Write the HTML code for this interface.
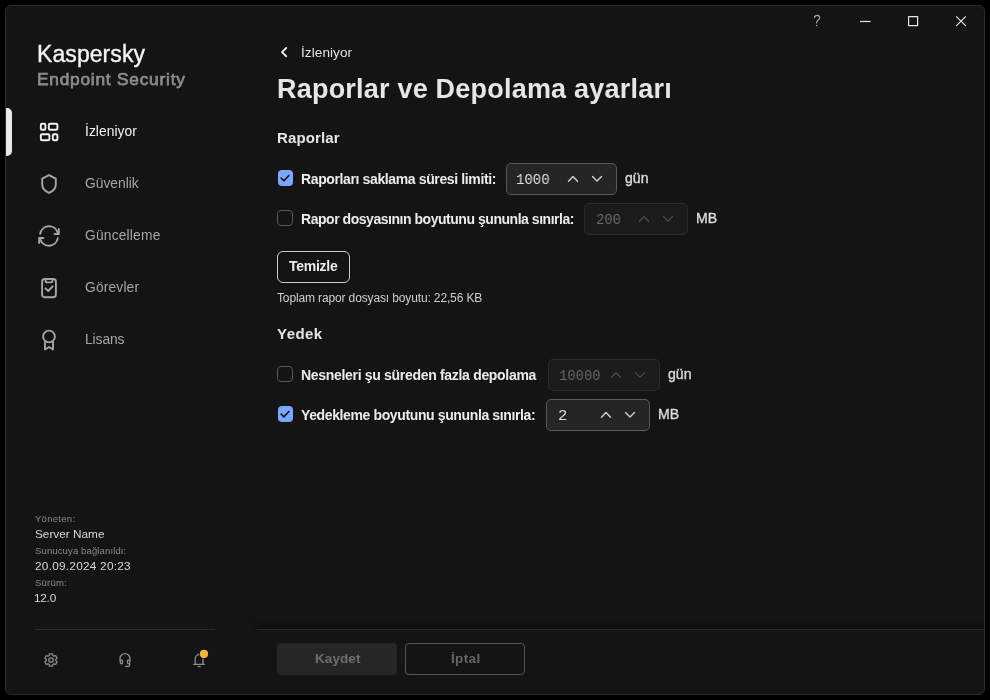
<!DOCTYPE html>
<html><head><meta charset="utf-8">
<style>
html,body{margin:0;padding:0;background:#000;width:990px;height:700px;overflow:hidden}
body{position:relative;font-family:"Liberation Sans",sans-serif}
.win{position:absolute;left:5px;top:5px;width:978px;height:688px;background:#141414;border:1px solid #2b2b32;border-radius:6px;overflow:hidden}
.t{position:absolute;white-space:nowrap;line-height:1;will-change:transform}
.abs{position:absolute;box-sizing:border-box}
svg{position:absolute;left:0;top:0;overflow:visible}
</style></head><body>
<div class="win"></div>
<!-- active indicator -->
<div class="abs" style="left:6px;top:108px;width:6px;height:48px;background:#e9e9e9;border-radius:0 5px 5px 0"></div>
<!-- separators -->
<div class="abs" style="left:35px;top:629px;width:180px;height:1px;background:#2a2a2a"></div>
<div class="abs" style="left:250px;top:621px;width:734px;height:8px;background:linear-gradient(to bottom,rgba(0,0,0,0),rgba(0,0,0,0.16) 60%,rgba(0,0,0,0.38));-webkit-mask-image:linear-gradient(to right,transparent,#000 10px)"></div>
<div class="abs" style="left:257px;top:629px;width:727px;height:1px;background:#2a2a2a"></div>
<!-- checkboxes -->
<div class="abs" style="left:277.5px;top:170.4px;width:15.2px;height:15.4px;background:#79a6fe;border-radius:4px"></div>
<div class="abs" style="left:277.3px;top:210.2px;width:15.5px;height:15.5px;border:1.5px solid #575757;border-radius:4px"></div>
<div class="abs" style="left:277.3px;top:366.2px;width:15.5px;height:15.5px;border:1.5px solid #575757;border-radius:4px"></div>
<div class="abs" style="left:277.5px;top:406.4px;width:15.2px;height:15.4px;background:#79a6fe;border-radius:4px"></div>
<!-- inputs -->
<div class="abs" style="left:505.5px;top:163px;width:111.5px;height:32px;background:#252525;border:1px solid #5a5a5a;border-radius:5px"></div>
<div class="abs" style="left:584px;top:203px;width:104px;height:32px;background:#1b1b1b;border:1px solid #2c2c2c;border-radius:5px"></div>
<div class="abs" style="left:548px;top:359px;width:112px;height:32px;background:#1b1b1b;border:1px solid #2c2c2c;border-radius:5px"></div>
<div class="abs" style="left:546px;top:399px;width:104px;height:32px;background:#252525;border:1px solid #5a5a5a;border-radius:5px"></div>
<!-- Temizle button -->
<div class="abs" style="left:277px;top:251px;width:73px;height:32px;border:1px solid #cdcdcd;border-radius:6px"></div>
<!-- footer buttons -->
<div class="abs" style="left:277px;top:643px;width:120px;height:32px;background:#262626;border-radius:4px"></div>
<div class="abs" style="left:405px;top:643px;width:120px;height:32px;border:1px solid #565656;border-radius:4px"></div>
<svg width="990" height="700" viewBox="0 0 990 700" fill="none" stroke-linecap="round" stroke-linejoin="round">
 <!-- window controls -->
 <g stroke="#e6e6e6" stroke-width="1.2" stroke-linecap="butt">
  <line x1="860" y1="21.5" x2="870.5" y2="21.5"/>
  <rect x="908.6" y="16.6" width="9" height="9"/>
  <path d="M956.2 16.3 L965.8 25.9 M965.8 16.3 L956.2 25.9"/>
 </g>
 <g stroke="#ababab" stroke-width="1.1">
  <path d="M814.4 17.6 C814.6 16.1 815.6 15.4 817 15.4 C818.6 15.4 819.6 16.4 819.6 17.7 C819.6 19.1 818.6 19.7 817.6 20.5 C816.9 21.1 816.6 21.8 816.6 23"/>
 </g>
 <circle cx="816.6" cy="25.5" r="0.75" fill="#ababab"/>
 <g>
 </g>
 <!-- checkmarks -->
 <g stroke="#141414" stroke-width="1.65">
  <path d="M281.2 178.1 L284 180.8 L288.9 175.5"/>
  <path d="M281.2 414.1 L284 416.8 L288.9 411.5"/>
 </g>
 <!-- chevrons enabled -->
 <g stroke="#d2d2d2" stroke-width="1.4">
  <path d="M568.5 181.3 L573 176.6 L577.5 181.3"/><path d="M592.5 176.6 L597 181.1 L601.5 176.6"/>
  <path d="M601.5 417.3 L606 412.6 L610.5 417.3"/><path d="M625.5 412.6 L630 417.1 L634.5 412.6"/>
 </g>
 <g stroke="#4e4e4e" stroke-width="1.3">
  <path d="M639.5 221.3 L644 216.6 L648.5 221.3"/><path d="M663.5 216.6 L668 221.1 L672.5 216.6"/>
  <path d="M611.5 377.3 L616 372.6 L620.5 377.3"/><path d="M635.5 372.6 L640 377.1 L644.5 372.6"/>
 </g>
 <!-- breadcrumb chevron -->
 <path d="M286.2 48 L282 52.1 L286.2 56.2" stroke="#ececec" stroke-width="1.9"/>
 <!-- nav icons -->
 <g stroke="#f2f2f2" stroke-width="1.9">
  <rect x="40.8" y="123.8" width="4.6" height="6" rx="1.3"/>
  <rect x="48.8" y="123.8" width="8.6" height="6" rx="1.3"/>
  <rect x="40.8" y="134.2" width="8.6" height="6" rx="1.3"/>
  <rect x="52.8" y="134.2" width="4.6" height="6" rx="1.3"/>
 </g>
 <g stroke="#a6a6a6" stroke-width="1.9">
  <path d="M49 175.2 L42.2 178.6 V184.6 C42.4 188.8 45.2 191.3 49 192.9 C52.8 191.3 55.6 188.8 55.8 184.6 V178.6 Z"/>
  <path d="M40.2 233.8 A9 9 0 0 1 57.6 232.4"/>
  <path d="M58.8 229 V234 H54.6"/>
  <path d="M57.8 238.2 A9 9 0 0 1 40.4 239.6"/>
  <path d="M39.2 243 V238 H43.4"/>
  <rect x="42.1" y="279" width="13.8" height="18.2" rx="2.6"/>
  <path d="M45.6 279.2 V281 A1.4 1.4 0 0 0 47 282.4 H51 A1.4 1.4 0 0 0 52.4 281 V279.2"/>
  <path d="M45.5 288.3 L48.2 291 L52.6 286.3"/>
  <circle cx="49" cy="336.5" r="5.9"/>
  <path d="M45 342 V349.5 L49 347 L53 349.5 V342"/>
 </g>
 <!-- bottom icons -->
 <g stroke="#8e8e8e" stroke-width="1.3">
  <path d="M49.20 655.55 L49.45 653.79 L52.55 653.79 L52.80 655.55 L53.96 656.22 L55.60 655.55 L57.15 658.24 L55.75 659.33 L55.75 660.67 L57.15 661.76 L55.60 664.45 L53.96 663.78 L52.80 664.45 L52.55 666.21 L49.45 666.21 L49.20 664.45 L48.04 663.78 L46.40 664.45 L44.85 661.76 L46.25 660.67 L46.25 659.33 L44.85 658.24 L46.40 655.55 L48.04 656.22 Z"/>
  <circle cx="51" cy="660" r="2.2"/>
  <path d="M120 660.5 V658.6 A5 5 0 0 1 130 658.6 V660.5"/>
  <rect x="120.3" y="659.8" width="2.2" height="4" rx="1.1"/>
  <rect x="127.5" y="659.8" width="2.2" height="4" rx="1.1"/>
  <path d="M129.6 663.8 V665.2 A1.2 1.2 0 0 1 128.4 666.4 H125.6"/>
  <path d="M193.7 664.3 H204.5 M195.2 664.3 V658.8 A3.9 4.2 0 0 1 203 658.8 V664.3 M199.1 654.6 V653.6 M198.2 666.6 H200.2"/>
 </g>
 <circle cx="204" cy="653.9" r="4.9" fill="#141414"/><circle cx="204" cy="653.9" r="4.1" fill="#f3b63e"/>
</svg>

<div class="t" style="left:37.02px;top:43.00px;font-family:'Liberation Sans';font-size:23px;font-weight:400;color:#f5f5f5;-webkit-text-stroke:0.35px #f5f5f5;letter-spacing:0.081px">Kaspersky</div>
<div class="t" style="left:37.23px;top:70.80px;font-family:'Liberation Sans';font-size:17.3px;font-weight:400;color:#8b8b8b;-webkit-text-stroke:0.75px #8b8b8b;letter-spacing:0.775px">Endpoint Security</div>
<div class="t" style="left:84.95px;top:124.90px;font-family:'Liberation Sans';font-size:13.8px;font-weight:400;color:#f2f2f2;letter-spacing:0.050px">İzleniyor</div>
<div class="t" style="left:84.70px;top:176.90px;font-family:'Liberation Sans';font-size:13.8px;font-weight:400;color:#a6a6a6;letter-spacing:0.007px">Güvenlik</div>
<div class="t" style="left:84.70px;top:228.90px;font-family:'Liberation Sans';font-size:13.8px;font-weight:400;color:#a6a6a6;letter-spacing:0.189px">Güncelleme</div>
<div class="t" style="left:84.60px;top:280.80px;font-family:'Liberation Sans';font-size:13.8px;font-weight:400;color:#a6a6a6;letter-spacing:0.164px">Görevler</div>
<div class="t" style="left:84.70px;top:332.70px;font-family:'Liberation Sans';font-size:13.8px;font-weight:400;color:#a6a6a6;letter-spacing:-0.080px">Lisans</div>
<div class="t" style="left:34.95px;top:513.80px;font-family:'Liberation Sans';font-size:9.5px;font-weight:400;color:#8a8a8a;letter-spacing:0.286px">Yöneten:</div>
<div class="t" style="left:34.70px;top:529.00px;font-family:'Liberation Sans';font-size:11.8px;font-weight:400;color:#d8d8d8">Server Name</div>
<div class="t" style="left:34.70px;top:546.00px;font-family:'Liberation Sans';font-size:9.5px;font-weight:400;color:#8a8a8a;letter-spacing:0.132px">Sunucuya bağlanıldı:</div>
<div class="t" style="left:34.70px;top:560.80px;font-family:'Liberation Sans';font-size:11.8px;font-weight:400;color:#d8d8d8;letter-spacing:0.253px">20.09.2024 20:23</div>
<div class="t" style="left:34.70px;top:578.00px;font-family:'Liberation Sans';font-size:9.5px;font-weight:400;color:#8a8a8a;letter-spacing:0.220px">Sürüm:</div>
<div class="t" style="left:34.15px;top:593.00px;font-family:'Liberation Sans';font-size:11.8px;font-weight:400;color:#d8d8d8;letter-spacing:-0.250px">12.0</div>
<div class="t" style="left:300.75px;top:46.00px;font-family:'Liberation Sans';font-size:13.6px;font-weight:400;color:#e0e0e0;letter-spacing:0.056px">İzleniyor</div>
<div class="t" style="left:277.15px;top:75.80px;font-family:'Liberation Sans';font-size:27px;font-weight:700;color:#e6e6e6;letter-spacing:0.212px">Raporlar ve Depolama ayarları</div>
<div class="t" style="left:276.90px;top:129.70px;font-family:'Liberation Sans';font-size:15px;font-weight:700;color:#e6e6e6;letter-spacing:0.114px">Raporlar</div>
<div class="t" style="left:301.35px;top:172.10px;font-family:'Liberation Sans';font-size:14px;font-weight:700;color:#ececec;letter-spacing:-0.374px">Raporları saklama süresi limiti:</div>
<div class="t" style="left:301.35px;top:212.10px;font-family:'Liberation Sans';font-size:14px;font-weight:700;color:#ececec;letter-spacing:-0.463px">Rapor dosyasının boyutunu şununla sınırla:</div>
<div class="t" style="left:289.40px;top:258.90px;font-family:'Liberation Sans';font-size:14px;font-weight:700;color:#ececec;letter-spacing:-0.267px">Temizle</div>
<div class="t" style="left:277.35px;top:292.10px;font-family:'Liberation Sans';font-size:12px;font-weight:400;color:#cfcfcf;letter-spacing:-0.135px">Toplam rapor dosyası boyutu: 22,56 KB</div>
<div class="t" style="left:277.05px;top:326.00px;font-family:'Liberation Sans';font-size:15px;font-weight:700;color:#e6e6e6;letter-spacing:0.450px">Yedek</div>
<div class="t" style="left:301.05px;top:368.00px;font-family:'Liberation Sans';font-size:14px;font-weight:700;color:#ececec;letter-spacing:-0.310px">Nesneleri şu süreden fazla depolama</div>
<div class="t" style="left:300.95px;top:408.20px;font-family:'Liberation Sans';font-size:14px;font-weight:700;color:#ececec;letter-spacing:-0.376px">Yedekleme boyutunu şununla sınırla:</div>
<div class="t" style="left:624.72px;top:171.00px;font-family:'Liberation Sans';font-size:14px;font-weight:400;color:#dcdcdc;-webkit-text-stroke:0.35px #dcdcdc;letter-spacing:0.075px">gün</div>
<div class="t" style="left:695.97px;top:210.90px;font-family:'Liberation Sans';font-size:14.1px;font-weight:400;color:#dcdcdc;-webkit-text-stroke:0.35px #dcdcdc;letter-spacing:-0.050px">MB</div>
<div class="t" style="left:667.77px;top:366.90px;font-family:'Liberation Sans';font-size:14px;font-weight:400;color:#dcdcdc;-webkit-text-stroke:0.35px #dcdcdc;letter-spacing:0.075px">gün</div>
<div class="t" style="left:657.77px;top:407.10px;font-family:'Liberation Sans';font-size:14.1px;font-weight:400;color:#dcdcdc;-webkit-text-stroke:0.35px #dcdcdc;letter-spacing:0.050px">MB</div>
<div class="t" style="left:516.40px;top:173.30px;font-family:'Liberation Mono';font-size:15.5px;font-weight:400;color:#e0e0e0;transform:scaleX(0.8993);transform-origin:1.00px 0">1000</div>
<div class="t" style="left:595.91px;top:213.30px;font-family:'Liberation Mono';font-size:15.5px;font-weight:400;color:#6a6a6a;transform:scaleX(0.8923);transform-origin:1.00px 0">200</div>
<div class="t" style="left:559.31px;top:369.30px;font-family:'Liberation Mono';font-size:15.5px;font-weight:400;color:#6a6a6a;transform:scaleX(0.8899);transform-origin:1.00px 0">10000</div>
<div class="t" style="left:557.59px;top:409.30px;font-family:'Liberation Mono';font-size:15.5px;font-weight:400;color:#e0e0e0;transform:scaleX(1.0069);transform-origin:1.00px 0">2</div>
<div class="t" style="left:314.75px;top:651.60px;font-family:'Liberation Sans';font-size:13.5px;font-weight:700;color:#6e6e6e;letter-spacing:0.090px">Kaydet</div>
<div class="t" style="left:450.85px;top:651.80px;font-family:'Liberation Sans';font-size:13.5px;font-weight:700;color:#666666;letter-spacing:0.362px">İptal</div>
</body></html>
